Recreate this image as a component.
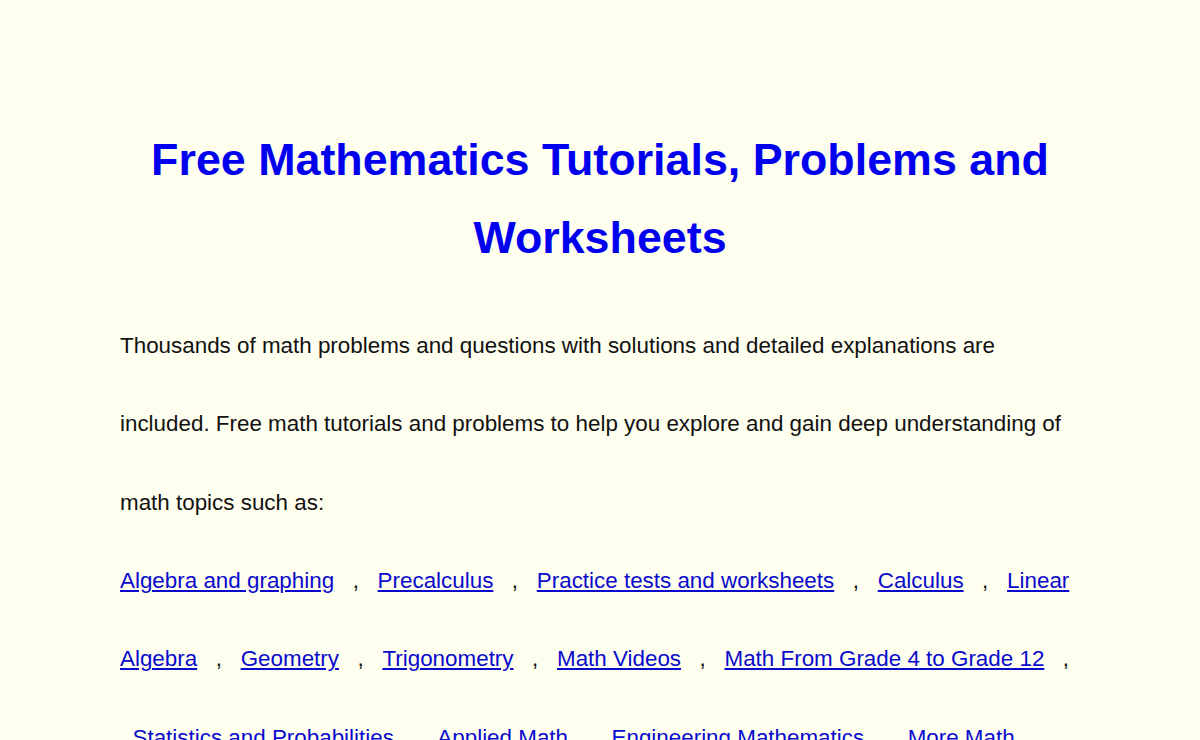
import React from "react";

const links = [
  "Algebra and graphing",
  "Precalculus",
  "Practice tests and worksheets",
  "Calculus",
  "Linear Algebra",
  "Geometry",
  "Trigonometry",
  "Math Videos",
  "Math From Grade 4 to Grade 12",
  "Statistics and Probabilities",
  "Applied Math",
  "Engineering Mathematics",
  "More Math",
];

export default function App() {
  return (
    <div className="min-h-screen bg-[#fffff0] font-['Liberation_Sans',Arial,sans-serif]">
      <div className="mx-[120px] pt-[120px]">
        <h1 className="text-center text-[44.8px] leading-[78.4px] font-bold text-[#0000ee]">
          Free Mathematics Tutorials, Problems and Worksheets
        </h1>
        <p className="mt-[30px] text-[22.4px] leading-[78.4px] text-[#111111]">
          Thousands of math problems and questions with solutions and detailed explanations are included. Free math tutorials and problems to help you explore and gain deep understanding of math topics such as:
          <br />
          {links.map((l, i) => (
            <React.Fragment key={l}>
              <a
                href="#"
                className={`text-[#0a0acc] underline ${i > 0 ? "ml-[12.5px]" : ""}`}
              >
                {l}
              </a>
              <span className="ml-[18.5px]">,</span>{" "}
            </React.Fragment>
          ))}
        </p>
      </div>
    </div>
  );
}
